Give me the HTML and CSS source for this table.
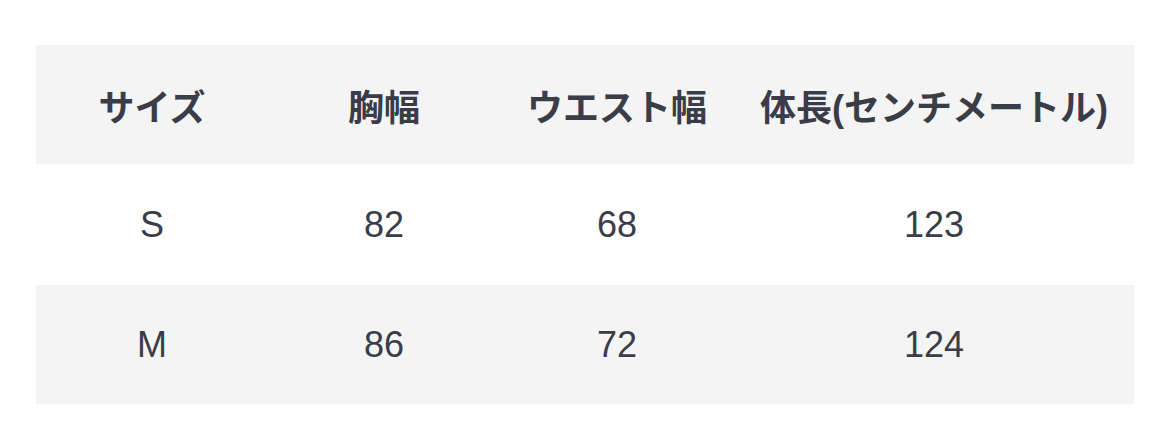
FILE: index.html
```html
<!DOCTYPE html>
<html lang="ja">
<head>
<meta charset="utf-8">
<link rel="stylesheet" href="styles.css">
</head>
<body>
<div class="wrap">
<table class="size-table">
<colgroup>
<col class="c1"><col class="c2"><col class="c3"><col class="c4">
</colgroup>
<thead>
<tr><th>サイズ</th><th>胸幅</th><th>ウエスト幅</th><th>体長(センチメートル)</th></tr>
</thead>
<tbody>
<tr class="odd"><td>S</td><td>82</td><td>68</td><td>123</td></tr>
<tr class="even"><td>M</td><td>86</td><td>72</td><td>124</td></tr>
</tbody>
</table>
</div>
</body>
</html>
```
FILE: styles.css
```css
html, body {
  margin: 0;
  padding: 0;
  background: #ffffff;
}
.wrap {
  padding: 45px 36px 0 36px;
}
.size-table {
  width: 1098px;
  border-collapse: collapse;
  table-layout: fixed;
  font-family: "Liberation Sans", "Noto Sans CJK JP", sans-serif;
  color: #3a3d47;
  font-size: 36px;
}
.c1 { width: 232px; }
.c2 { width: 232px; }
.c3 { width: 234px; }
.c4 { width: 400px; }
th, td {
  text-align: center;
  vertical-align: middle;
  padding: 0;
  white-space: nowrap;
}
thead tr {
  background: #f4f4f5;
  height: 119px;
}
th {
  font-weight: 700;
}
tr.odd {
  background: #ffffff;
  height: 121px;
}
tr.even {
  background: #f4f4f5;
  height: 119px;
}
td {
  font-weight: 400;
}
```
